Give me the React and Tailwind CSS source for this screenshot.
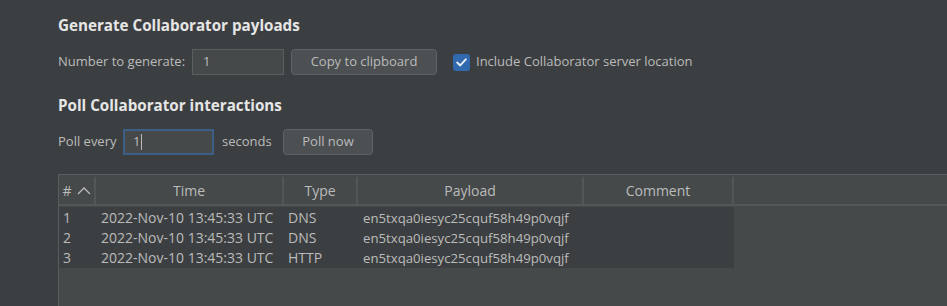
import React from 'react';

const rows = [
  { n: 1, time: '2022-Nov-10 13:45:33 UTC', type: 'DNS', payload: 'en5txqa0iesyc25cquf58h49p0vqjf' },
  { n: 2, time: '2022-Nov-10 13:45:33 UTC', type: 'DNS', payload: 'en5txqa0iesyc25cquf58h49p0vqjf' },
  { n: 3, time: '2022-Nov-10 13:45:33 UTC', type: 'HTTP', payload: 'en5txqa0iesyc25cquf58h49p0vqjf' },
];

export default function App() {
  return (
    <div
      className="h-[306px] w-[947px] overflow-hidden bg-[#3c3f41] pl-[58px] text-[#bbbbbb] text-[13px]"
      style={{ fontFamily: '"Open Sans", "Noto Sans", sans-serif' }}
    >
      {/* Generar payloads */}
      <h1 className="mt-[15px] h-[20px] leading-[20px] text-[15.2px] font-bold text-[#e6e6e6]">
        Generate Collaborator payloads
      </h1>
      <div className="mt-[14px] flex h-[26px] items-center">
        <span className="w-[134px] shrink-0">Number to generate:</span>
        <div className="flex h-[26px] w-[92px] items-center border border-[#5b5e60] bg-[#45494a] pl-[10px]">1</div>
        <button className="ml-[7px] h-[26px] w-[146px] rounded-[4px] border border-[#5e6264] bg-[#4c5052] text-[#bbbbbb]">
          Copy to clipboard
        </button>
        <div className="ml-[16px] flex h-[17px] w-[17px] items-center justify-center rounded-[3px] bg-[#3069ad]">
          <svg width="11" height="9" viewBox="0 0 11 9" fill="none">
            <path d="M1.2 4.6 L4.2 7.4 L9.8 1.4" stroke="#e8eef5" strokeWidth="2" strokeLinecap="round" strokeLinejoin="round" />
          </svg>
        </div>
        <span className="ml-[6px]">Include Collaborator server location</span>
      </div>

      {/* Poll */}
      <h1 className="mt-[20px] h-[20px] leading-[20px] text-[15.2px] font-bold text-[#e6e6e6]">
        Poll Collaborator interactions
      </h1>
      <div className="mt-[14px] flex h-[26px] items-center">
        <span className="w-[65px] shrink-0">Poll every</span>
        <div className="flex h-[26px] w-[91px] items-center border-2 border-[#3d5f87] bg-[#45494a] pl-[8px]">
          1<span className="ml-[1px] h-[16px] w-px bg-[#bbbbbb]" />
        </div>
        <span className="ml-[8px] w-[61px] shrink-0">seconds</span>
        <button className="h-[26px] w-[90px] rounded-[4px] border border-[#5e6264] bg-[#4c5052] text-[#bbbbbb]">
          Poll now
        </button>
      </div>

      {/* Tabla */}
      <div className="mt-[19px] h-[200px] border-l border-t border-[#5a5d5f] bg-[#45494a] text-[14px]">
        <div className="grid h-[31px] grid-cols-[37px_188px_74px_226px_150px_1fr] border-b-2 border-[#535759] pt-[2px]">
          <div className="flex items-center justify-center gap-[5px] border-r-2 border-[#525658]">
            <span>#</span>
            <svg width="14" height="8" viewBox="0 0 14 8" fill="none">
              <path d="M1 7 L7 1 L13 7" stroke="#bbbbbb" strokeWidth="1.3" />
            </svg>
          </div>
          <div className="flex items-center justify-center border-r-2 border-[#525658]">Time</div>
          <div className="flex items-center justify-center border-r-2 border-[#525658]">Type</div>
          <div className="flex items-center justify-center border-r-2 border-[#525658]">Payload</div>
          <div className="flex items-center justify-center border-r-2 border-[#525658]">Comment</div>
          <div />
        </div>
        <div className="mt-px w-[675px] bg-[#3c3f41] pt-px">
          {rows.map((r) => (
            <div key={r.n} className="grid h-[20px] grid-cols-[37px_188px_74px_226px_150px] items-center leading-[20px]">
              <span className="pl-[4px]">{r.n}</span>
              <span className="pl-[5px]">{r.time}</span>
              <span className="pl-[4px]">{r.type}</span>
              <span className="pl-[5px] text-[13.2px]">{r.payload}</span>
              <span />
            </div>
          ))}
        </div>
      </div>
    </div>
  );
}
